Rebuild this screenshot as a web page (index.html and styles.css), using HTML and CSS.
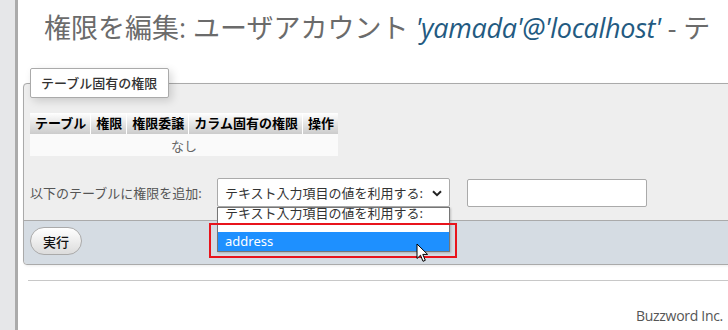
FILE: index.html
```html
<!DOCTYPE html>
<html lang="ja">
<head>
<meta charset="utf-8">
<title>権限を編集</title>
<link rel="stylesheet" href="styles.css">
</head>
<body>
<div class="page">
  <aside class="sidebar"></aside>
  <main class="main">
    <h2 class="title">権限を編集: ユーザアカウント <em class="acct">'yamada'@'localhost'</em> - テ</h2>
    <fieldset class="box">
      <legend class="legend">テーブル固有の権限</legend>
      <div class="box-body">
        <table class="privs">
          <thead>
            <tr><th>テーブル</th><th>権限</th><th>権限委譲</th><th>カラム固有の権限</th><th>操作</th></tr>
          </thead>
          <tbody>
            <tr><td colspan="5">なし</td></tr>
          </tbody>
        </table>
        <div class="add-row">
          <span class="add-label">以下のテーブルに権限を追加:</span>
          <div class="select-wrap">
            <div class="select">
              <span>テキスト入力項目の値を利用する:</span>
              <svg class="chev" width="10" height="7" viewBox="0 0 10 7"><path d="M1 1.2 L5 5.2 L9 1.2" fill="none" stroke="#222" stroke-width="2"/></svg>
            </div>
            <div class="dropdown">
              <div class="opt opt-first"><span>テキスト入力項目の値を利用する:</span></div>
              <div class="opt opt-sel">address</div>
            </div>
            <div class="highlight"></div>
            <svg class="cursor" width="14" height="20" viewBox="0 0 14 20"><path d="M1 1 L1 15.5 L4.5 12.2 L7 18.3 L9.3 17.3 L6.8 11.4 L11.6 11.4 Z" fill="#fff" stroke="#000" stroke-width="1" stroke-linejoin="miter"/></svg>
          </div>
          <div class="text-input"></div>
        </div>
      </div>
      <div class="box-footer">
        <button class="go" type="button">実行</button>
      </div>
    </fieldset>
    <hr class="rule">
  </main>
</div>
<div class="watermark">Buzzword Inc.</div>
</body>
</html>
```
FILE: styles.css
```css
html, body {
  margin: 0;
  padding: 0;
  width: 728px;
  height: 330px;
  overflow: hidden;
  background: #fff;
  font-family: "Noto Sans", "Noto Sans CJK JP", sans-serif;
  font-size: 13px;
  color: #333;
}
.page {
  display: flex;
  height: 330px;
}
.sidebar {
  width: 15px;
  flex: none;
  background: #e6e7e9;
  border-right: 3px solid #ababab;
}
.main {
  flex: 1;
  min-width: 0;
  padding-left: 5px;
  overflow: hidden;
}
.title {
  margin: 0;
  padding: 12px 0 0 21px;
  height: 32px;
  line-height: 32px;
  font-size: 27px;
  font-weight: normal;
  color: #6b6b6b;
  white-space: nowrap;
  font-family: "Open Sans", "Noto Sans CJK JP", sans-serif;
}
.acct {
  color: #235a81;
  font-style: italic;
  letter-spacing: -0.3px;
}
.box {
  margin: 24px -30px 0 0;
  padding: 0;
  border: 1px solid #aaa;
  border-radius: 4px;
  background: #eee;
  min-width: 0;
  box-shadow: 1px 1px 3px rgba(0,0,0,0.08);
}
.legend {
  margin-left: 6px;
  padding: 0 10px;
  height: 28px;
  line-height: 28px;
  background: #fff;
  border: 1px solid #aaa;
  border-radius: 2px;
  box-shadow: 3px 3px 8px rgba(0,0,0,0.15);
  color: #333;
  font-size: 13px;
  font-weight: 500;
  width: 117px;
  white-space: nowrap;
}
.box-body {
  padding: 15px 6px 13px;
}
.privs {
  border-collapse: collapse;
  background: #fafafa;
}
.privs th {
  padding: 0 4px 0 5px;
  height: 21px;
  line-height: 21px;
  font-weight: bold;
  color: #000;
  text-align: left;
  background: linear-gradient(#ffffff, #cbcbcb);
  border-right: 1px solid #fff;
  white-space: nowrap;
}
.privs th:last-child { border-right: 0; }
.privs td {
  height: 22px;
  padding: 0;
  text-align: center;
  color: #666;
  background: #fafafa;
}
.add-row {
  display: flex;
  align-items: center;
  margin-top: 22px;
}
.add-label {
  color: #555;
  width: 187px;
  flex: none;
}
.select-wrap {
  position: relative;
  flex: none;
}
.select {
  box-sizing: border-box;
  width: 233px;
  height: 29px;
  border: 1px solid #aaa;
  border-radius: 2px;
  background: #fff;
  display: flex;
  align-items: center;
  justify-content: space-between;
  padding: 0 7px 0 7px;
  color: #333;
  white-space: nowrap;
}
.chev { margin-top: 1px; }
.dropdown {
  position: absolute;
  left: 0;
  top: 29px;
  box-sizing: border-box;
  width: 233px;
  height: 45px;
  border: 1px solid #767676;
  background: #fff;
  overflow: hidden;
  box-shadow: 1px 1px 2px rgba(0,0,0,0.2);
}
.opt {
  padding-left: 7px;
  white-space: nowrap;
}
.opt-first {
  height: 24px;
  overflow: hidden;
  color: #333;
}
.opt-first span {
  display: block;
  line-height: 15px;
  margin-top: -2px;
}
.opt-sel {
  height: 19px;
  line-height: 18px;
  background: #1e90ff;
  color: #fff;
}
.highlight {
  position: absolute;
  left: -8px;
  top: 45px;
  width: 244px;
  height: 31px;
  border: 2px solid #e8141c;
}
.cursor {
  position: absolute;
  left: 199px;
  top: 65px;
}
.text-input {
  box-sizing: border-box;
  margin-left: 17px;
  width: 180px;
  height: 28px;
  border: 1px solid #aaa;
  border-radius: 2px;
  background: #fff;
}
.box-footer {
  border-top: 1px solid #aaa;
  background: #d5dce3;
  padding: 6px 6px 9px;
  border-radius: 0 0 4px 4px;
}
.go {
  box-sizing: border-box;
  width: 52px;
  height: 28px;
  border: 1px solid #aaa;
  border-radius: 14px;
  background: linear-gradient(#ffffff, #dcdcdc);
  font-family: "Noto Sans CJK JP", sans-serif;
  font-size: 13px;
  font-weight: 500;
  color: #111;
  padding: 0;
}
.rule {
  margin: 15px 0 0 5px;
  border: 0;
  border-top: 1px solid #c8c8c8;
}
.watermark {
  position: absolute;
  right: 5px;
  bottom: 5px;
  font-family: "Open Sans", sans-serif;
  font-size: 14px;
  color: #555;
  letter-spacing: -0.3px;
}
```
